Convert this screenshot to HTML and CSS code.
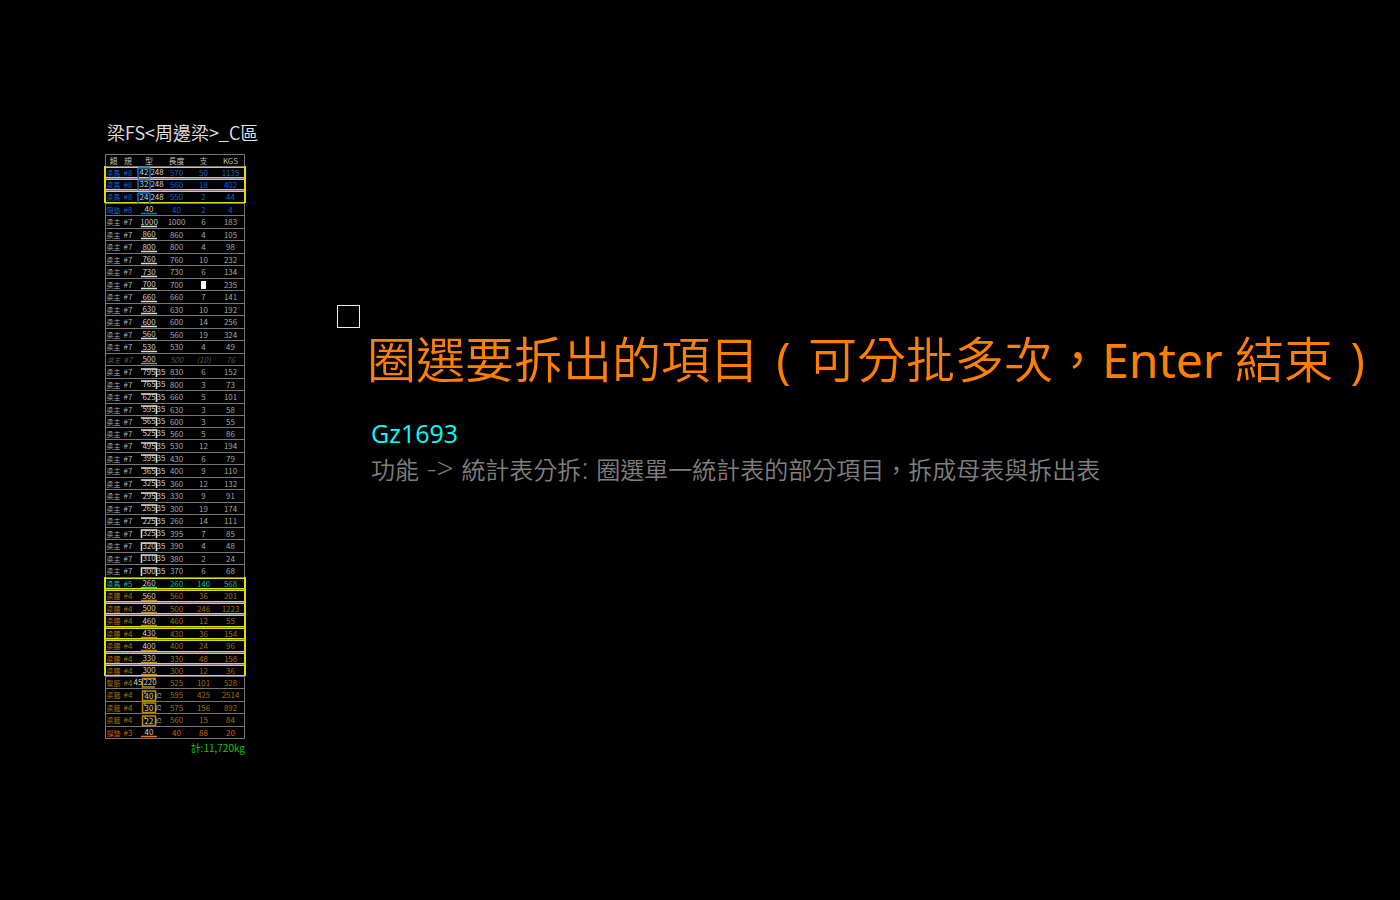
FILE: index.html
```
<!DOCTYPE html>
<html lang="zh-Hant">
<head>
<meta charset="utf-8">
<title>統計表分拆</title>
<link rel="stylesheet" href="styles.css">
</head>
<body>
<main class="stage">
  <section class="sheet">
    <h2 class="sheet-title">梁FS&lt;周邊梁&gt;_C區</h2>
    <table class="bars">
      <thead><tr><th>類</th><th>規</th><th>型</th><th>長度</th><th>支</th><th>KGS</th></tr></thead>
      <tbody id="rows"></tbody>
    </table>
    <p class="total">計:11,720kg</p>
  </section>
  <section class="prompt">
    <div class="pickbox"></div>
    <h1 class="headline">圈選要拆出的項目<span class="paren">(</span>可分批多次&#xFF0C;<span class="latin">Enter </span>結束<span class="paren">)</span></h1>
    <p class="code">Gz1693</p>
    <p class="desc">功能<span class="arrow"> -&gt; </span>統計表分拆<span class="arrow">: </span>圈選單一統計表的部分項目&#xFF0C;拆成母表與拆出表</p>
  </section>
</main>
<script src="rows.js"></script>
</body>
</html>
```
FILE: styles.css
```
* { box-sizing: border-box; }
body {
  margin: 0;
  min-height: 100vh;
  background: #000;
  color: #b4b4b4;
  font-family: "Open Sans", "Noto Sans CJK TC", sans-serif;
}
h1, h2, p { margin: 0; font-weight: 350; white-space: nowrap; }
.stage { display: flex; align-items: flex-start; padding: 116px 32px 0 105px; }
.sheet { flex: none; width: 140px; }
.sheet-title {
  padding-left: 2px;
  font: 350 18px/32px "Noto Sans CJK TC", sans-serif;
  color: #e4e4e4;
  margin-bottom: 6px;
}
.bars {
  width: 100%;
  table-layout: fixed;
  border-collapse: separate;
  border-spacing: 0;
  border: 1px solid #777;
  border-top: 0;
  font: 400 8px/10px "Noto Sans CJK TC", sans-serif;
}
.bars th, .bars td {
  height: 12px;
  padding: 0;
  border-top: 1px solid #777;
  text-align: center;
  font-weight: 350;
  white-space: nowrap;
}
.bars th { color: #ccc; }
.bars td:first-child { font-size: 7px; }
.bars tbody tr:nth-child(odd) td { height: 13px; }
.bars tbody tr:nth-child(20n+1) td { height: 12px; }
.bars th:nth-child(1) { width: 15px; }
.bars th:nth-child(2) { width: 14px; }
.bars th:nth-child(3) { width: 28px; }
.bars th:nth-child(4) { width: 27px; }
.bars th:nth-child(5) { width: 27px; }
.bars .picked td { box-shadow: inset 0 1px #dede00, inset 0 -1px #dede00; }
.bars .picked td:first-child { box-shadow: inset 0 1px #dede00, inset 0 -1px #dede00, -2px 0 #dede00; }
.bars .picked td:last-child { box-shadow: inset 0 1px #dede00, inset 0 -1px #dede00, 2px 0 #dede00; }
.bars .blue { color: #0a6cd8; }
.bars .cyan { color: #00c8c0; }
.bars .gold { color: #b07800; }
.bars .rust { color: #e06400; }
.bars .dim { color: #666; font-style: italic; }
.shape { display: block; width: 100%; height: 11px; overflow: visible; font-style: normal; }
.shape text { fill: #ddd; font-size: 8px; }
.shape .turned { font-size: 6px; }
.shape path { fill: none; stroke: #ddd; stroke-width: 1.5; }
.blue .shape path { stroke: #0a6cd8; }
.cyan .shape path { stroke: #00dcd4; }
.gold .shape path { stroke: #c08a00; }
.rust .shape path { stroke: #f07000; }
.dim .shape path { stroke: #888; }
.cursor { display: block; width: 5px; height: 8px; margin: 0 auto; background: #fff; }
.total {
  text-align: right;
  font: 400 10px/18px "Noto Sans CJK TC", sans-serif;
  color: #00c814;
}
.prompt { padding: 189px 0 0 92px; }
.pickbox { width: 23px; height: 23px; border: 1px solid #eee; }
.headline {
  margin-left: 30px;
  font-size: 49px;
  line-height: 62px;
  color: #ff8000;
}
.latin { font-family: "Noto Sans", sans-serif; font-size: 48px; font-weight: 400; }
.paren { display: inline-block; width: 49px; text-align: center; font-weight: 400; }
.code { margin: 24px 0 0 34px; font-size: 25px; line-height: 36px; font-weight: 400; color: #00ffff; }
.desc { margin-left: 34px; font-size: 24px; line-height: 38px; color: #808080; }
.arrow { font-size: 30px; line-height: 1; }
```
FILE: rows.js
```
const rows = `blue 1|梁馬|#8|L42,248|570|50|1135
blue 1|梁馬|#8|L32,248|560|18|402
blue 1|梁馬|#8|L24,248|550|2|44
blue 0|隔墊|#8|_40|40|2|4
w 0|梁主|#7|_1000|1000|6|183
w 0|梁主|#7|_860|860|4|105
w 0|梁主|#7|_800|800|4|98
w 0|梁主|#7|_760|760|10|232
w 0|梁主|#7|_730|730|6|134
w 0|梁主|#7|_700|700|*|235
w 0|梁主|#7|_660|660|7|141
w 0|梁主|#7|_630|630|10|192
w 0|梁主|#7|_600|600|14|256
w 0|梁主|#7|_560|560|19|324
w 0|梁主|#7|_530|530|4|49
dim 0|梁主|#7|_500|500|(10)|76
w 0|梁主|#7|R795,35|830|6|152
w 0|梁主|#7|R765,35|800|3|73
w 0|梁主|#7|R625,35|660|5|101
w 0|梁主|#7|R595,35|630|3|58
w 0|梁主|#7|R565,35|600|3|55
w 0|梁主|#7|R525,35|560|5|86
w 0|梁主|#7|R495,35|530|12|194
w 0|梁主|#7|R395,35|430|6|79
w 0|梁主|#7|R365,35|400|9|110
w 0|梁主|#7|R325,35|360|12|132
w 0|梁主|#7|R295,35|330|9|91
w 0|梁主|#7|R265,35|300|19|174
w 0|梁主|#7|R225,35|260|14|111
w 0|梁主|#7|U325,35|395|7|85
w 0|梁主|#7|U320,35|390|4|48
w 0|梁主|#7|U310,35|380|2|24
w 0|梁主|#7|U300,35|370|6|68
cyan 1|梁馬|#5|_260|260|140|568
gold 1|梁腰|#4|_560|560|36|201
gold 1|梁腰|#4|_500|500|246|1223
gold 1|梁腰|#4|_460|460|12|55
gold 1|梁腰|#4|_430|430|36|154
gold 1|梁腰|#4|_400|400|24|96
gold 1|梁腰|#4|_330|330|48|158
gold 1|梁腰|#4|_300|300|12|36
gold 0|繫筋|#4|C220,45|525|101|528
gold 0|梁箍|#4|B40,75|595|425|2514
gold 0|梁箍|#4|B30,75|575|156|892
gold 0|梁箍|#4|B22,75|560|15|84
rust 0|撐墊|#3|_40|40|88|20`.split("\n");

const paths = {
  _: "M6 9.500H22",
  L: "M3 11V1M3 1H15M15 1V11",
  R: "M6 2H21.500V10",
  U: "M6.500 10V2H21.500V10",
  C: "M21 1.500H7.500V10H20",
  B: "M7.500 1H20.500V10.500H7.500ZM10 1V4"
};
const side = { L: 22, R: 26, U: 26, C: 3 };
const mid = { _: 14, L: 9, R: 14, U: 14, C: 15, B: 14 };
const text = (x, y, s) => `<text x="${x}" y="${y}" text-anchor="middle">${s}</text>`;

function shape(code) {
  const kind = code[0];
  const [main, extra] = code.slice(1).split(",");
  let label = "";
  if (kind === "B") {
    label = `<text class="turned" transform="translate(26 6) rotate(-90)" text-anchor="middle">${extra}</text>`;
  } else if (extra) {
    label = text(side[kind], 8, extra);
  }
  return `<svg class="shape"><path d="${paths[kind]}"/>${text(mid[kind], kind === "B" ? 9 : 8, main)}${label}</svg>`;
}

document.getElementById("rows").innerHTML = rows.map(line => {
  const [head, name, size, form, len, count, kgs] = line.split("|");
  const [tone, picked] = head.split(" ");
  const n = count === "*" ? '<span class="cursor"></span>' : count;
  return `<tr class="${tone}${picked === "1" ? " picked" : ""}"><td>${name}</td><td>${size}</td><td>${shape(form)}</td><td>${len}</td><td>${n}</td><td>${kgs}</td></tr>`;
}).join("");
```
